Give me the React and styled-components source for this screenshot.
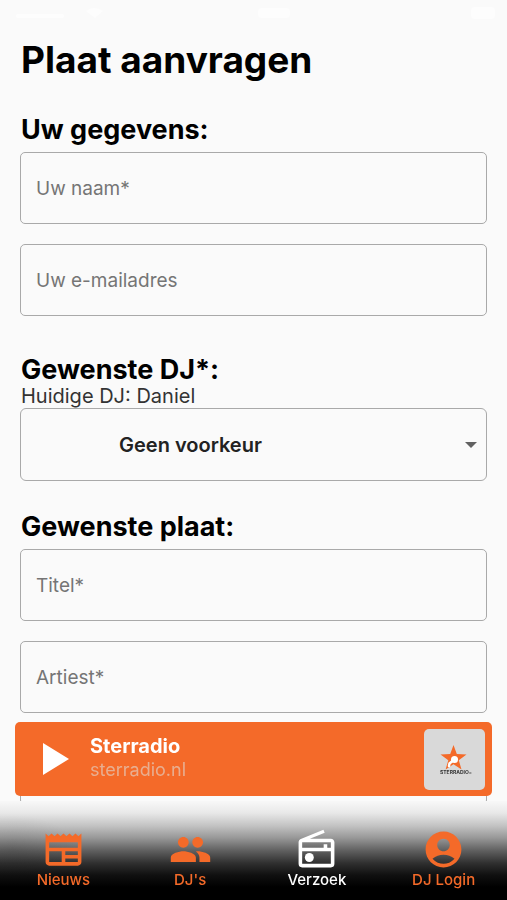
import React from "react";
import styled, { createGlobalStyle } from "styled-components";
import { MdNewspaper, MdPeople, MdOutlineRadio, MdAccountCircle } from "react-icons/md";

const ORANGE = "#f46a29";

const GlobalStyle = createGlobalStyle`
  *, *::before, *::after { box-sizing: border-box; }
  html, body { margin: 0; height: 100%; background: #fafafa; }
  body { font-family: Inter, "Liberation Sans", sans-serif; color: #000; overflow: hidden; }
`;

const Screen = styled.div`
  height: 100vh;
  overflow: hidden;
  background: #fafafa;
`;

const StatusBar = styled.header`
  display: flex;
  justify-content: space-between;
  align-items: center;
  height: 26px;
  padding: 0 12px 0 16px;
  fill: #fdfdfd;
`;

const Content = styled.main`
  padding: 12px 20px 200px;
`;

const Title = styled.h1`
  margin: 0 1px;
  font-size: 37px;
  line-height: 44px;
  font-weight: 700;
`;

const Section = styled.section`
  margin-top: ${(p) => p.$gap}px;
`;

const Heading = styled.h2`
  margin: 0 1px;
  padding-bottom: ${(p) => (p.$tight ? 0 : 4)}px;
  font-size: 27px;
  line-height: ${(p) => (p.$tight ? 28 : 36)}px;
  font-weight: 700;
`;

const Note = styled.p`
  margin: 0 1px;
  font-size: 20px;
  line-height: 24px;
  color: #333;
`;

const Fields = styled.div`
  display: flex;
  flex-direction: column;
  gap: 20px;
`;

const Input = styled.input`
  display: block;
  width: 100%;
  height: 72px;
  padding: 0 15px;
  border: 1px solid #a9a9a9;
  border-radius: 5px;
  background: transparent;
  font: 400 19px/24px Inter, "Liberation Sans", sans-serif;
  color: #222;
  &::placeholder { color: #757575; opacity: 1; }
`;

const SelectBox = styled.div`
  display: grid;
  align-items: center;
  & > * { grid-area: 1 / 1; }
`;

const Select = styled.select`
  appearance: none;
  width: 100%;
  height: 73px;
  padding: 0 40px 0 98px;
  border: 1px solid #a9a9a9;
  border-radius: 6px;
  background: transparent;
  font: 600 20px/24px Inter, "Liberation Sans", sans-serif;
  color: #222;
`;

const Caret = styled.svg`
  justify-self: end;
  margin-right: 10px;
  pointer-events: none;
`;

const Dock = styled.div`
  position: fixed;
  left: 0;
  right: 0;
  bottom: 0;
`;

const Player = styled.section`
  display: flex;
  align-items: center;
  height: 74px;
  margin: 0 15px 5px;
  padding: 0 7px 0 27px;
  border-radius: 5px;
  background: ${ORANGE};
`;

const PlayButton = styled.button`
  display: flex;
  width: 48px;
  padding: 0;
  border: 0;
  background: none;
`;

const Track = styled.div`
  flex: 1;
  padding-bottom: 3px;
  line-height: 23px;
`;

const Station = styled.div`
  font-size: 20px;
  font-weight: 700;
  color: #fff;
`;

const Site = styled.div`
  font-size: 18px;
  color: #e8ae90;
`;

const Cover = styled.svg`
  width: 61px;
  height: 61px;
  border-radius: 5px;
  background: #d9d9d9;
`;

const Nav = styled.nav`
  display: grid;
  grid-template-columns: repeat(4, 1fr);
  height: 99px;
  padding-top: 27px;
  background:
    radial-gradient(ellipse 64px 34px at 12px 48px, rgba(0, 0, 0, 0.1), transparent),
    linear-gradient(#f8f8f8 0, #e8e8e8 12px, #c2c2c2 25px, #979797 37px, #5e5e5e 50px, #303030 62px, #101010 74px, #000 86px);
`;

const NavLink = styled.a`
  display: flex;
  flex-direction: column;
  align-items: center;
  font-size: 15px;
  line-height: 18px;
  font-weight: 500;
  text-decoration: none;
  color: ${(p) => (p.$active ? "#fff" : ORANGE)};
`;

const tabs = [
  { label: "Nieuws", Icon: MdNewspaper },
  { label: "DJ's", Icon: MdPeople },
  { label: "Verzoek", Icon: MdOutlineRadio, active: true },
  { label: "DJ Login", Icon: MdAccountCircle },
];

export default function App() {
  return (
    <Screen>
      <GlobalStyle />
      <StatusBar aria-hidden="true">
        <svg width="88" height="14"><rect y="8" width="48" height="4" rx="2" /><path d="M70 5q8-6 17 0l-8 7z" /></svg>
        <svg width="60" height="12"><rect y="1" width="32" height="10" rx="4" /></svg>
        <svg width="24" height="14"><rect width="24" height="12" y="1" rx="4" /></svg>
      </StatusBar>
      <Content>
        <Title>Plaat aanvragen</Title>
        <Section $gap={30}>
          <Heading>Uw gegevens:</Heading>
          <Fields>
            <Input aria-label="Uw naam" placeholder="Uw naam*" />
            <Input aria-label="Uw e-mailadres" type="email" placeholder="Uw e-mailadres" />
          </Fields>
        </Section>
        <Section $gap={40}>
          <Heading $tight id="dj">Gewenste DJ*:</Heading>
          <Note>Huidige DJ: Daniel</Note>
          <SelectBox>
            <Select aria-labelledby="dj" defaultValue="none">
              <option value="none">Geen voorkeur</option>
              <option value="daniel">Daniel</option>
            </Select>
            <Caret width="12" height="6" viewBox="0 0 12 6" aria-hidden="true"><path d="M0 0h12L6 6z" fill="#616161" /></Caret>
          </SelectBox>
        </Section>
        <Section $gap={28}>
          <Heading>Gewenste plaat:</Heading>
          <Fields>
            <Input aria-label="Titel" placeholder="Titel*" />
            <Input aria-label="Artiest" placeholder="Artiest*" />
            <Input aria-label="Bericht" />
          </Fields>
        </Section>
      </Content>
      <Dock>
        <Player aria-label="Speler">
          <PlayButton aria-label="Afspelen">
            <svg width="28" height="32" viewBox="0 0 28 32"><path d="M1 0l26 16L1 32z" fill="#fff" /></svg>
          </PlayButton>
          <Track>
            <Station>Sterradio</Station>
            <Site>sterradio.nl</Site>
          </Track>
          <Cover viewBox="0 0 61 61" role="img" aria-label="Sterradio logo">
            <path d="M29.500 16l3.300 9.100 9.700.3-7.700 5.900 2.700 9.300-8-5.400-7.900 5.400 2.700-9.300-7.800-5.900 9.700-.3z" fill={ORANGE} />
            <path d="M28.500 32l-3 2.500-.5 2.500" fill="none" stroke="#fff" strokeWidth="2.500" strokeLinecap="round" />
            <circle cx="30.500" cy="30.500" r="3.500" fill="#fff" />
            <text x="16" y="45" fontSize="5" fontWeight="700" fill="#333">STERRADIO<tspan fontSize="2">.nl</tspan></text>
          </Cover>
        </Player>
        <Nav aria-label="Hoofdmenu">
          {tabs.map(({ label, Icon, active }) => (
            <NavLink key={label} href="#" $active={active} aria-current={active ? "page" : undefined}>
              <Icon size={43} aria-hidden="true" />
              {label}
            </NavLink>
          ))}
        </Nav>
      </Dock>
    </Screen>
  );
}
